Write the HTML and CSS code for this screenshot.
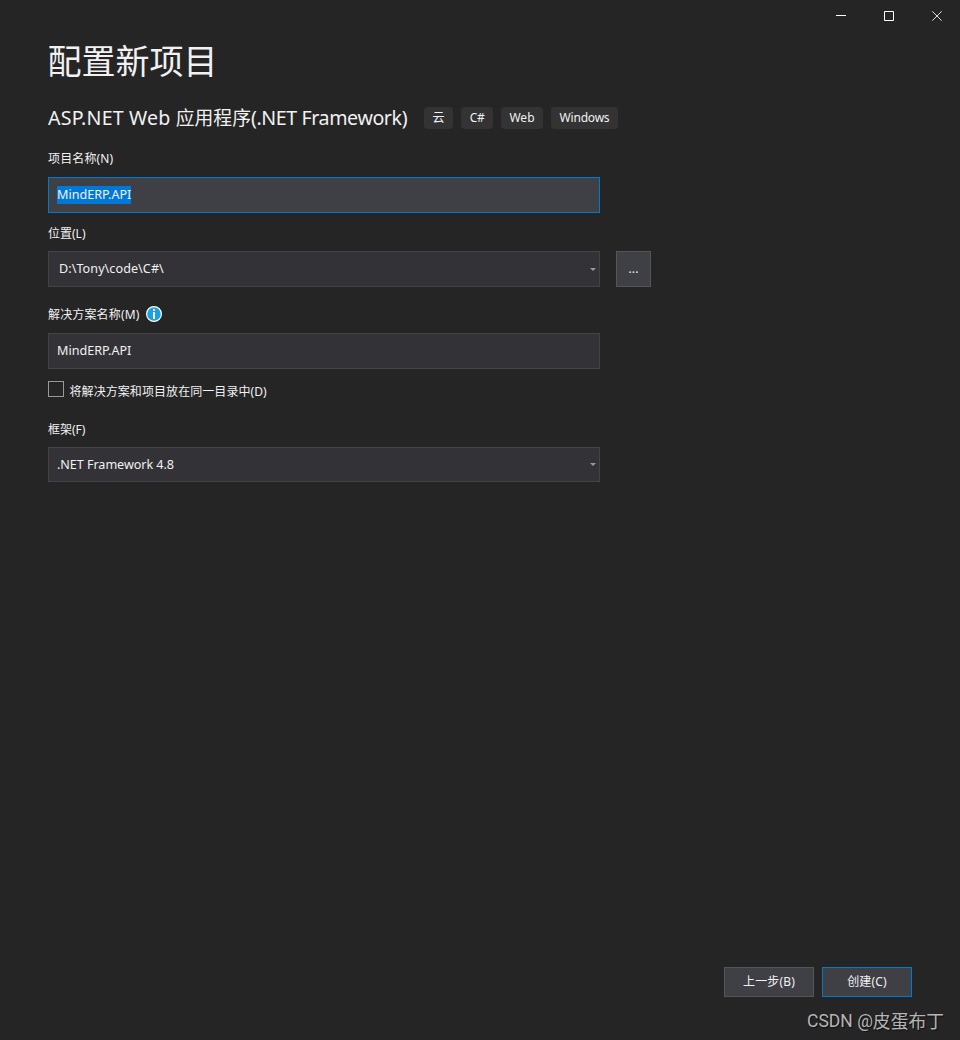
FILE: index.html
```html
<!DOCTYPE html>
<html lang="zh-CN">
<head>
<meta charset="utf-8">
<title>配置新项目</title>
<link rel="stylesheet" href="styles.css">
</head>
<body>
<div class="window">
  <header class="titlebar">
    <svg class="caption" viewBox="0 0 48 32"><path d="M20 15.5h10"/></svg>
    <svg class="caption" viewBox="0 0 48 32"><path d="M20.5 11.5h9v9h-9z"/></svg>
    <svg class="caption close" viewBox="0 0 48 32"><path d="M20.3 11.3l9.4 9.4M29.7 11.3l-9.4 9.4"/></svg>
  </header>
  <main class="content">
    <h1 class="title">配置新项目</h1>
    <div class="template">
      <h2 class="template-name">ASP.NET Web <span class="cjk">应用程序</span><span class="suffix">(.NET Framework)</span></h2>
      <span class="tag tag-cloud">云</span>
      <span class="tag tag-cs">C#</span>
      <span class="tag tag-web">Web</span>
      <span class="tag tag-win">Windows</span>
    </div>
    <label class="label label-name">项目名称(N)</label>
    <div class="field focused"><span class="value selected">MindERP.API</span></div>
    <label class="label label-location">位置(L)</label>
    <div class="location">
      <div class="field combo"><span class="value path">D:\Tony\code\C#\</span><svg class="arrow" viewBox="0 0 6 3"><path d="M0 0h6L3 3z"/></svg></div>
      <button class="button browse">...</button>
    </div>
    <div class="label label-solution">
      <label>解决方案名称(M)</label>
      <svg class="info" viewBox="0 0 16 16"><circle class="disc" cx="8" cy="8" r="7.4"/><path d="M7 3h2v2H7zM7 6h2v7H7z"/></svg>
    </div>
    <div class="field"><span class="value">MindERP.API</span></div>
    <label class="check"><span class="box"></span><span class="check-text">将解决方案和项目放在同一目录中(D)</span></label>
    <label class="label label-framework">框架(F)</label>
    <div class="field combo framework"><span class="value fw">.NET Framework 4.8</span><svg class="arrow" viewBox="0 0 6 3"><path d="M0 0h6L3 3z"/></svg></div>
  </main>
  <footer class="actions">
    <button class="button action">上一步(B)</button>
    <button class="button action primary">创建(C)</button>
  </footer>
  <div class="watermark"><span class="mark-latin">CSDN @</span>皮蛋布丁</div>
</div>
</body>
</html>
```
FILE: styles.css
```css
* { box-sizing: border-box; }
body {
  margin: 0;
  background: #252526;
  color: #f1f1f1;
  font: 12px/16px "Noto Sans", "Noto Sans CJK SC", sans-serif;
}
.window {
  display: flex;
  flex-direction: column;
  height: 1040px;
}
.titlebar { display: flex; justify-content: flex-end; height: 32px; }
.caption { width: 48px; height: 32px; fill: none; stroke: #fff; stroke-width: 1; }
.close { stroke: #ddd; }
.content { flex: 1; display: flex; flex-direction: column; padding: 0 48px; }
.title { margin: 4px 0 0 -0.5px; height: 51px; font-size: 34px; line-height: 50px; font-weight: 400; }
.template { display: flex; align-items: center; height: 22px; margin-top: 20px; }
.template-name {
  width: 376px;
  margin: 0;
  font-size: 19.6px;
  line-height: 22px;
  font-weight: 400;
  letter-spacing: 0.18px;
  white-space: nowrap;
}
.cjk { font-size: 18.8px; letter-spacing: 0; }
.suffix { letter-spacing: -0.39px; }
.tag {
  height: 22px;
  margin-right: 8px;
  border-radius: 4px;
  background: #333334;
  line-height: 22px;
  text-align: center;
}
.tag-cloud { width: 29px; }
.tag-cs { width: 32px; letter-spacing: -0.3px; }
.tag-web { width: 42px; }
.tag-win { width: 67px; letter-spacing: -0.2px; }
.label { display: flex; height: 16px; letter-spacing: 0.15px; }
.label-name { margin: 22px 0 10px; }
.label-location { margin: 13px 0 9px; letter-spacing: 0; }
.label-solution { align-items: center; gap: 7px; margin: 19px 0 11px; }
.label-solution label { padding-top: 2px; }
.label-framework { margin: 21px 0 9px; letter-spacing: 0; }
.field {
  display: flex;
  align-items: center;
  width: 552px;
  height: 36px;
  padding: 0 3px 0 8px;
  border: 1px solid #434346;
  background: #333337;
}
.focused { border-color: #007acc; background: #3f3f46; }
.framework { height: 35px; }
.combo { justify-content: space-between; }
.value { margin-bottom: 1px; font-size: 12.6px; line-height: 17px; }
.selected { line-height: 18px; background: #0078d7; }
.path { padding-left: 2px; letter-spacing: 0.06px; }
.fw { letter-spacing: -0.05px; }
.arrow { width: 6px; height: 3px; fill: #999; }
.location { display: flex; gap: 16px; }
.button {
  border: 1px solid #555;
  padding: 0;
  background: #3f3f46;
  color: #f1f1f1;
  font: inherit;
  letter-spacing: 0.15px;
}
.browse { width: 35px; height: 36px; }
.info { width: 16px; height: 16px; fill: #fff; }
.disc { fill: #1ba1e2; stroke: #fff; stroke-width: 1.2; }
.check { display: flex; height: 20px; gap: 5.5px; margin-top: 12px; }
.box { width: 16px; height: 16px; border: 1px solid #999; }
.check-text { padding-top: 3px; letter-spacing: 0.07px; }
.actions { display: flex; justify-content: flex-end; gap: 8px; height: 30px; padding-right: 48px; }
.action { width: 90px; height: 30px; }
.primary { border-color: #007acc; }
.watermark {
  display: flex;
  justify-content: flex-end;
  height: 43px;
  padding: 11px 16px 0;
  color: #b5b5b5;
  font-size: 17.8px;
  line-height: 26px;
  text-shadow: 1px 1px 1px #111;
}
.mark-latin { font-family: Roboto, sans-serif; font-size: 17.5px; }
```
